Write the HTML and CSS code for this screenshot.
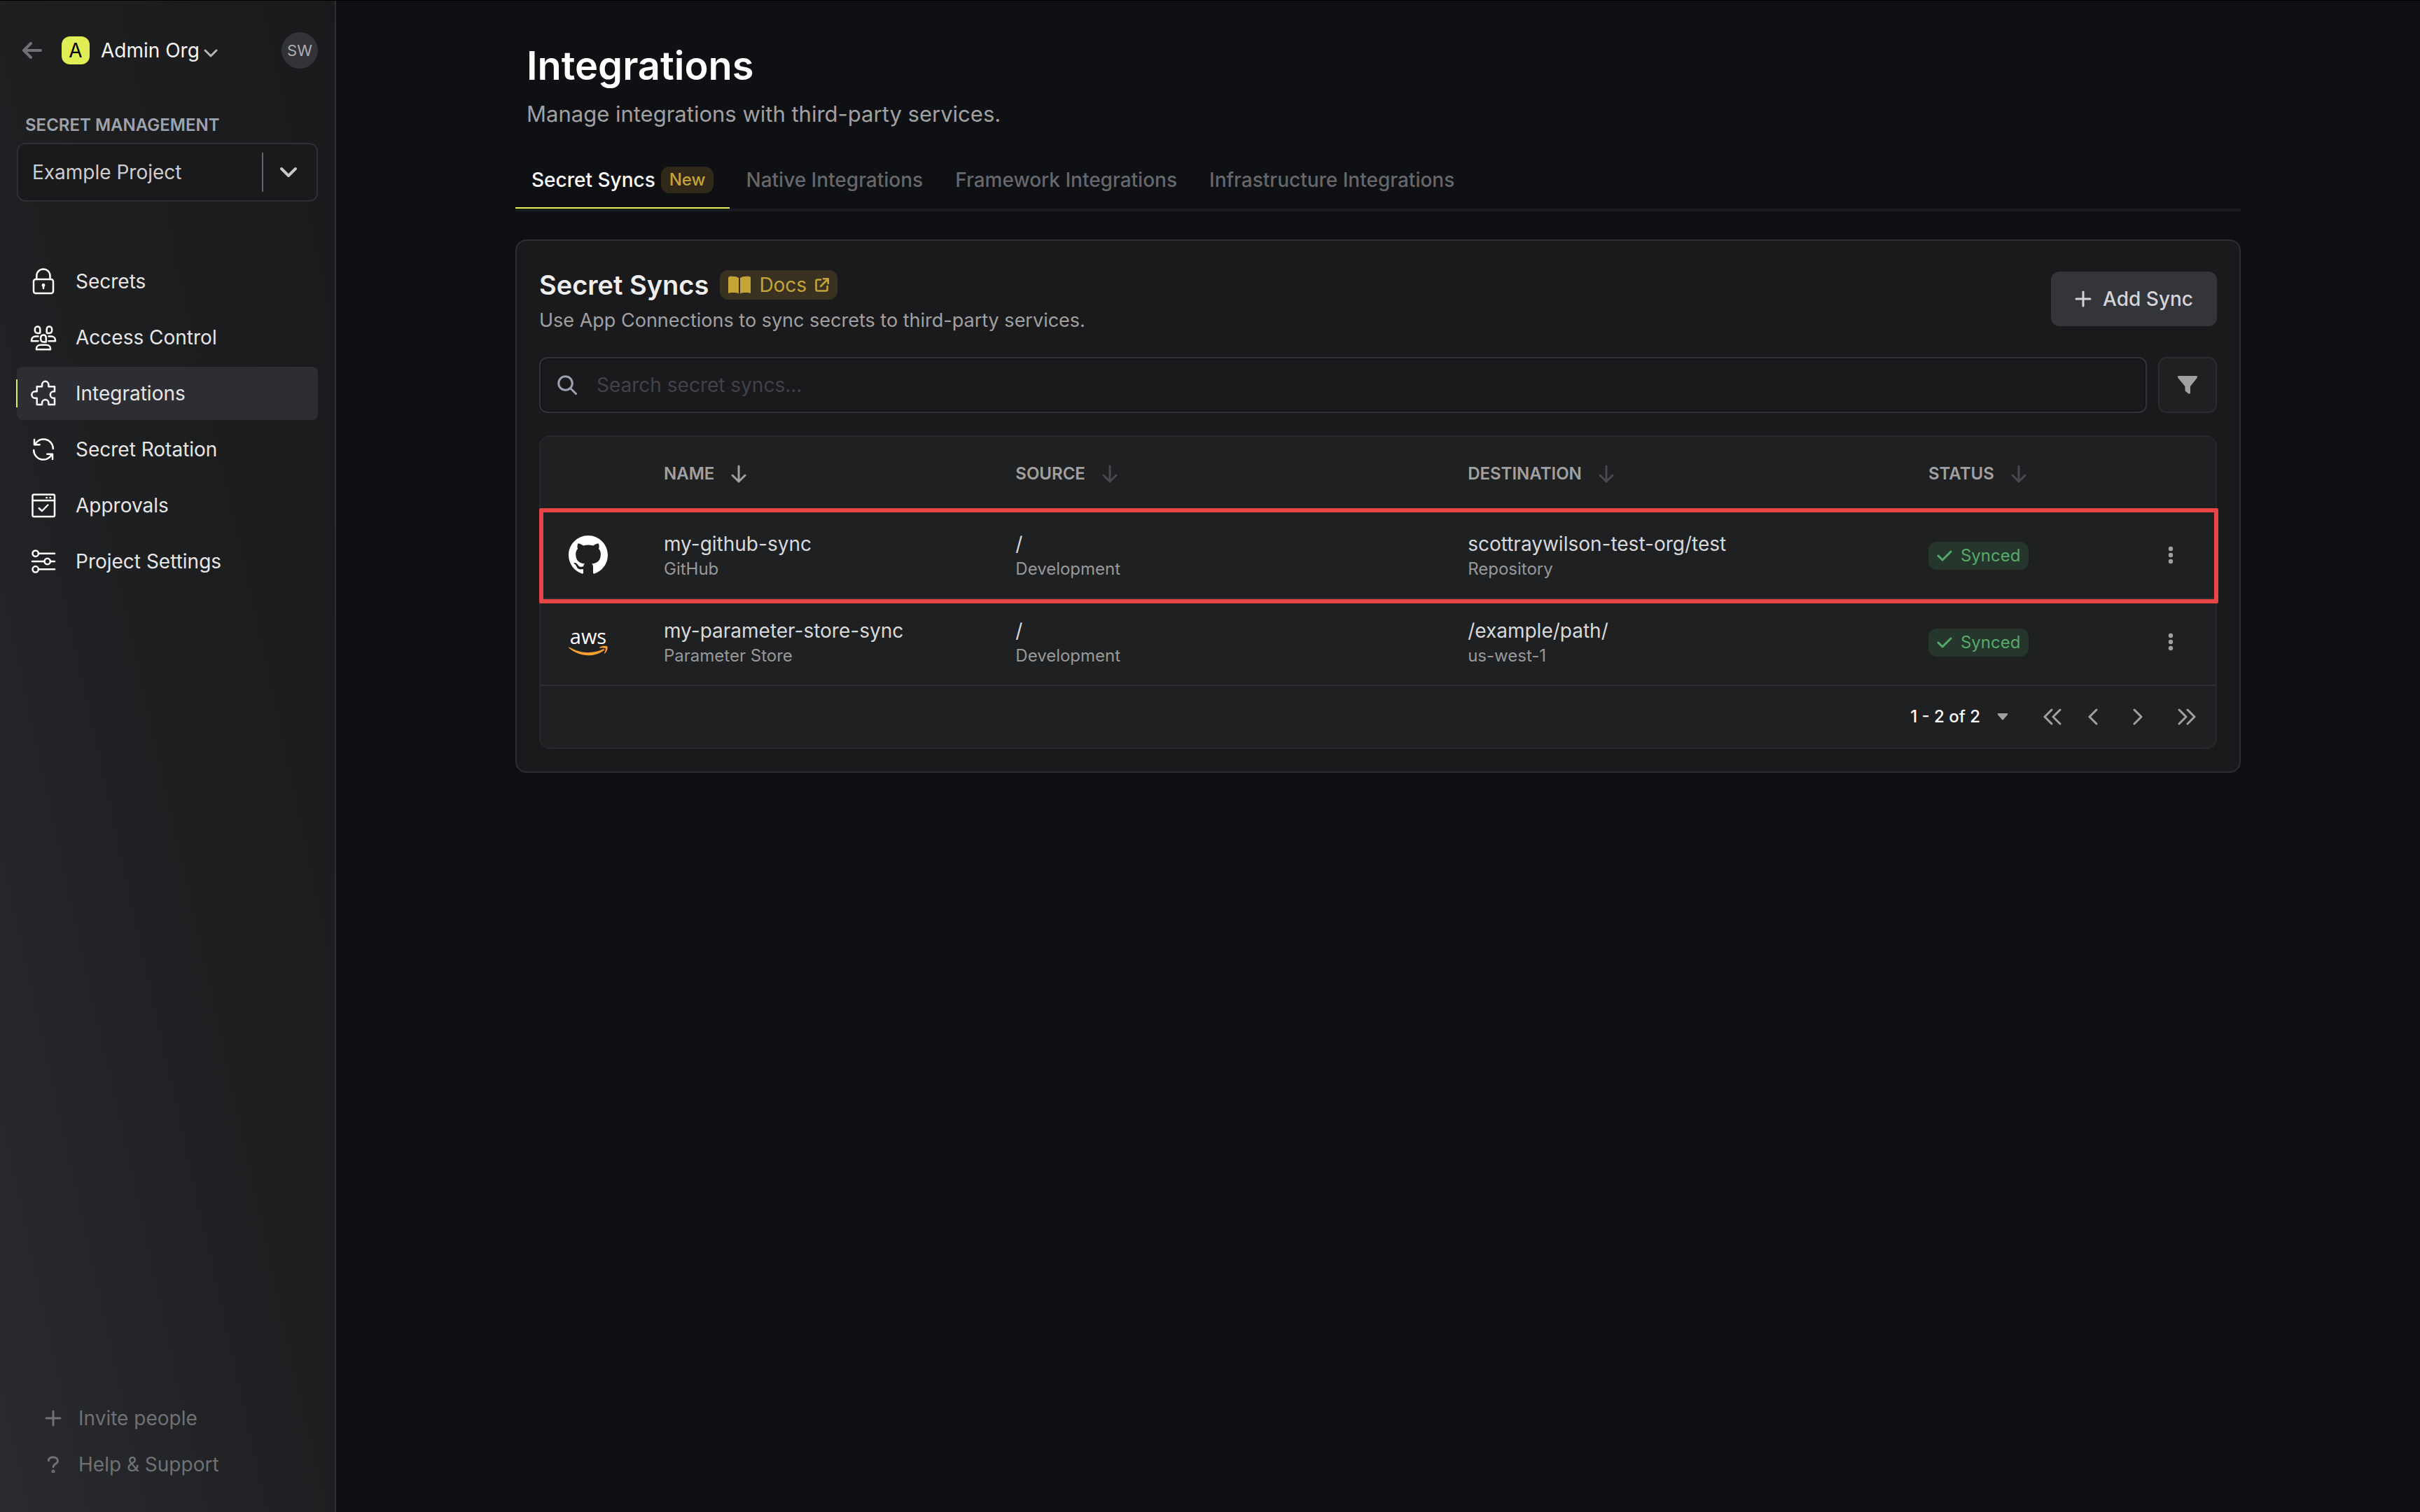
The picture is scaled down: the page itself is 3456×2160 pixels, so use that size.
FILE: index.html
```
<!DOCTYPE html>
<html lang="en">
<head>
    <meta charset="UTF-8">
    <title>Integrations</title>
    <link rel="stylesheet" href="styles.css">
</head>
<body>
    <div class="layout">
        <aside class="sidebar">
            <div class="org-bar">
                <a href="#" class="back" aria-label="Back">
                    <svg width="28" height="24" viewBox="0 0 28 24"><path d="M12 2L2 12l10 10M2 12h24" /></svg>
                </a>
                <button type="button" class="org-button">
                    <span class="org-logo">A</span>
                    <span>Admin Org</span>
                    <svg width="20" height="14" viewBox="0 0 20 14"><path d="M2 3l8 8 8-8" /></svg>
                </button>
                <button type="button" class="avatar">SW</button>
            </div>

            <label class="project-label" for="project">SECRET MANAGEMENT</label>
            <div class="project-select">
                <select id="project" name="project">
                    <option>Example Project</option>
                </select>
                <span class="project-arrow">
                    <svg width="24" height="16" viewBox="0 0 24 16"><path d="M2 3l10 10L22 3" /></svg>
                </span>
            </div>

            <nav class="menu">
                <a href="#">
                    <svg width="40" height="40" viewBox="0 0 40 40">
                        <rect x="6" y="17" width="28" height="20" rx="3" />
                        <path d="M10.3 17v-5a9.6 9.6 0 0 1 19.2 0v5" />
                        <path d="M20 25v5" /><circle cx="20" cy="25.4" r="1.2" />
                    </svg>
                    Secrets
                </a>
                <a href="#">
                    <svg width="40" height="40" viewBox="0 0 40 40">
                        <path d="M11.5 4.5c2.5 0 3.8 2 3.8 4.5v4q0 1-1 1H12c-3 0-4.2-2-4.2-4.8s1.200-4.700 3.700-4.700z" />
                        <path d="M28.5 4.5c-2.5 0-3.8 2-3.8 4.5v4q0 1 1 1H28c3 0 4.2-2 4.2-4.8s-1.200-4.700-3.700-4.700z" />
                        <path d="M20 16.500c2.700 0 3.800 2 3.800 4.600v5.400h-4c-2.800 0-3.700-2.200-3.700-5.200s1.200-4.800 3.900-4.800z" />
                        <path d="M12.500 18.500H9c-3.600 0-6 2.500-6 5.500v1.300h9.500M27.500 18.500H31c3.600 0 6 2.500 6 5.500v1.300h-9.500" />
                        <path d="M10 37.200V36c0-3 2.500-5.200 6-5.200h8c3.500 0 6 2.200 6 5.200v1.200z" />
                    </svg>
                    Access Control
                </a>
                <a href="#" class="active">
                    <svg width="40" height="40" viewBox="0 0 40 40">
                        <path d="M10.7 10.3H18V8a4.700 5.200 0 0 1 9.400 0v2.300H36v7h-1.500a4.700 4.700 0 0 0 0 9.400H36V36h-8.600v-2.300a4.700 4.700 0 0 0-9.400 0V36h-7.300v-9.300H8a4.700 4.700 0 0 1 0-9.400h2.700z" />
                    </svg>
                    Integrations
                </a>
                <a href="#">
                    <svg width="40" height="40" viewBox="0 0 40 40">
                        <path d="M7 6v7.300h7.700M8 13a13.600 13.600 0 0 1 25.800 6" />
                        <path d="M33 34v-7.300h-7.700M32 27a13.600 13.600 0 0 1-25.800-6" />
                    </svg>
                    Secret Rotation
                </a>
                <a href="#">
                    <svg width="40" height="40" viewBox="0 0 40 40">
                        <rect x="4.500" y="4.500" width="31.500" height="31.500" rx="2" />
                        <path d="M4.500 13H36M13.700 24l4.300 4 8.300-8.500M24.300 9h.6M29.500 9h.6" />
                    </svg>
                    Approvals
                </a>
                <a href="#">
                    <svg width="40" height="40" viewBox="0 0 40 40">
                        <circle cx="8.700" cy="8.700" r="4.200" /><path d="M13 8.700h23" />
                        <path d="M4 20h17.500M30 20h6" /><circle cx="25.700" cy="20" r="4.200" />
                        <circle cx="8.700" cy="31.300" r="4.200" /><path d="M13 31.300h23" />
                    </svg>
                    Project Settings
                </a>
            </nav>

            <div class="sidebar-footer">
                <button type="button">
                    <svg width="24" height="24" viewBox="0 0 24 24"><path d="M12 2v20M2 12h20" /></svg>
                    Invite people
                </button>
                <button type="button">
                    <svg width="24" height="24" viewBox="0 0 24 24"><path d="M5.500 6.500C5.500 3 8 1.800 12 1.800c4.200 0 6.500 2.200 6.500 5.200 0 4.200-6.300 4.200-6.300 8.500" /><circle cx="12" cy="22" r="1" /></svg>
                    Help &amp; Support
                </button>
            </div>
        </aside>

        <main class="main">
            <div class="container">
                <header class="page-header">
                    <h1>Integrations</h1>
                    <p>Manage integrations with third-party services.</p>
                </header>

                <nav class="tabs">
                    <a href="#" class="active">Secret Syncs <span class="badge-new">New</span></a>
                    <a href="#">Native Integrations</a>
                    <a href="#">Framework Integrations</a>
                    <a href="#">Infrastructure Integrations</a>
                </nav>

                <section class="card">
                    <div class="card-header">
                        <div>
                            <div class="card-title">
                                <h2>Secret Syncs</h2>
                                <a href="#" class="docs">
                                    <svg width="32" height="26" viewBox="0 0 32 26"><path d="M15 3.200C12 .8 5 .3 1.200 1.300Q0 1.600 0 3v22c4-1.400 11-1.200 15 .3zM17 3.200C20 .8 27 .3 30.800 1.300 31.600 1.600 32 2 32 3v22c-4-1.400-11-1.200-15 .3z" fill="currentColor" /></svg>
                                    Docs
                                    <svg class="line" width="20" height="20" viewBox="0 0 20 20"><path d="M8 2.500H3.500q-2 0-2 2v12q0 2 2 2h12q2 0 2-2V12M12 1.300h6.700V8M18 2L8 12" /></svg>
                                </a>
                            </div>
                            <p>Use App Connections to sync secrets to third-party services.</p>
                        </div>
                        <button type="button" class="add-button">
                            <svg width="24" height="24" viewBox="0 0 24 24"><path d="M12 2v20M2 12h20" /></svg>
                            Add Sync
                        </button>
                    </div>

                    <div class="toolbar">
                        <label class="search">
                            <svg width="28" height="28" viewBox="0 0 28 28"><circle cx="11.500" cy="11.500" r="9.800" /><path d="M19 19l7.500 7.500" /></svg>
                            <input type="search" placeholder="Search secret syncs..." aria-label="Search secret syncs">
                        </label>
                        <button type="button" class="filter-button" aria-label="Filter">
                            <svg width="28" height="26" viewBox="0 0 28 26"><path d="M1.500 0h25C28 0 28.500 1.700 27.500 3L18 15v9c0 1.500-1.500 2-2.600 1.200l-4-3Q10.500 21.500 10.500 20v-5L.5 3C-.5 1.700 0 0 1.500 0z" fill="currentColor" /></svg>
                        </button>
                    </div>

                    <div class="table-box">
                        <table>
                            <colgroup>
                                <col class="col-icon">
                                <col class="col-name">
                                <col class="col-source">
                                <col class="col-destination">
                                <col>
                                <col class="col-actions">
                            </colgroup>
                            <thead>
                                <tr>
                                    <th></th>
                                    <th>
                                        <button type="button" class="sort sorted">NAME
                                            <svg width="22" height="26" viewBox="0 0 22 26"><path d="M11 2v22M2 15l9 9 9-9" /></svg>
                                        </button>
                                    </th>
                                    <th>
                                        <button type="button" class="sort">SOURCE
                                            <svg width="22" height="26" viewBox="0 0 22 26"><path d="M11 2v22M2 15l9 9 9-9" /></svg>
                                        </button>
                                    </th>
                                    <th>
                                        <button type="button" class="sort">DESTINATION
                                            <svg width="22" height="26" viewBox="0 0 22 26"><path d="M11 2v22M2 15l9 9 9-9" /></svg>
                                        </button>
                                    </th>
                                    <th>
                                        <button type="button" class="sort">STATUS
                                            <svg width="22" height="26" viewBox="0 0 22 26"><path d="M11 2v22M2 15l9 9 9-9" /></svg>
                                        </button>
                                    </th>
                                    <th></th>
                                </tr>
                            </thead>
                            <tbody>
                                <tr class="highlight">
                                    <td class="logo">
                                        <svg width="56" height="56" viewBox="0 0 16 16"><path fill="#fff" d="M8 0C3.580 0 0 3.580 0 8c0 3.540 2.290 6.530 5.470 7.590.4.070.55-.17.55-.38 0-.19-.01-.82-.01-1.490-2.010.37-2.530-.49-2.690-.94-.09-.23-.48-.94-.82-1.130-.28-.15-.68-.52-.01-.53.63-.01 1.080.58 1.230.82.72 1.210 1.870.87 2.330.66.07-.52.28-.87.51-1.070-1.780-.2-3.640-.89-3.640-3.950 0-.87.31-1.590.82-2.150-.08-.2-.36-1.020.08-2.120 0 0 .67-.21 2.200.82.64-.18 1.320-.27 2-.27.68 0 1.360.09 2 .27 1.530-1.040 2.200-.82 2.200-.82.44 1.100.16 1.920.08 2.120.51.56.82 1.270.82 2.150 0 3.070-1.870 3.750-3.650 3.950.29.25.54.73.54 1.480 0 1.070-.01 1.930-.01 2.200 0 .21.15.46.55.38A8.010 8.010 0 0 0 16 8c0-4.420-3.580-8-8-8z" /></svg>
                                    </td>
                                    <td>my-github-sync<small>GitHub</small></td>
                                    <td>/<small>Development</small></td>
                                    <td>scottraywilson-test-org/test<small>Repository</small></td>
                                    <td><span class="status"><svg width="22" height="18" viewBox="0 0 22 18"><path d="M2 9l6 6L20 3" /></svg>Synced</span></td>
                                    <td>
                                        <button type="button" class="more" aria-label="More options">
                                            <svg width="8" height="26" viewBox="0 0 8 26"><circle cx="4" cy="4" r="3.200" /><circle cx="4" cy="13" r="3.200" /><circle cx="4" cy="22" r="3.200" /></svg>
                                        </button>
                                    </td>
                                </tr>
                                <tr>
                                    <td class="logo">
                                        <svg width="56" height="56" viewBox="0 0 56 56">
                                            <text class="aws-text" x="28" y="31" text-anchor="middle">aws</text>
                                            <path fill="#f7a031" d="M1 35.500c17 9.500 32 10 48.500 2.800 1.500-.5 2.500.8 1.200 1.700C36 51 15 49.500.3 36.600c-.6-.6-.1-1.400.7-1.100z" />
                                            <path fill="#f7a031" d="M44.500 36.600c-.6-.4-.4-1 .1-1.300 3-2 9.500-2 10.700-.7 1.200 1.500-.3 7.400-3.400 9.900-.6.5-1 .2-.8-.5.8-2 2.300-5.700 1.600-6.700-.8-.9-5.400-.8-8.200-.7z" />
                                        </svg>
                                    </td>
                                    <td>my-parameter-store-sync<small>Parameter Store</small></td>
                                    <td>/<small>Development</small></td>
                                    <td>/example/path/<small>us-west-1</small></td>
                                    <td><span class="status"><svg width="22" height="18" viewBox="0 0 22 18"><path d="M2 9l6 6L20 3" /></svg>Synced</span></td>
                                    <td>
                                        <button type="button" class="more" aria-label="More options">
                                            <svg width="8" height="26" viewBox="0 0 8 26"><circle cx="4" cy="4" r="3.200" /><circle cx="4" cy="13" r="3.200" /><circle cx="4" cy="22" r="3.200" /></svg>
                                        </button>
                                    </td>
                                </tr>
                            </tbody>
                        </table>

                        <div class="pagination">
                            <button type="button" class="page-size">1 - 2 of 2
                                <svg width="16" height="10" viewBox="0 0 16 10"><path d="M1.500 0h13q1.500.5.500 2L9 9q-1 1-2 0L1 2Q0 .5 1.500 0z" /></svg>
                            </button>
                            <button type="button" aria-label="First page"><svg width="26" height="24" viewBox="0 0 26 24"><path d="M12 2L2 12l10 10M24 2L14 12l10 10" /></svg></button>
                            <button type="button" class="prev" aria-label="Previous page"><svg width="14" height="24" viewBox="0 0 14 24"><path d="M12 2L2 12l10 10" /></svg></button>
                            <button type="button" aria-label="Next page"><svg width="14" height="24" viewBox="0 0 14 24"><path d="M2 2l10 10L2 22" /></svg></button>
                            <button type="button" aria-label="Last page"><svg width="26" height="24" viewBox="0 0 26 24"><path d="M2 2l10 10L2 22M14 2l10 10-10 10" /></svg></button>
                        </div>
                    </div>
                </section>
            </div>
        </main>
    </div>
</body>
</html>
```
FILE: styles.css
```
* {
    box-sizing: border-box;
}

body {
    margin: 0;
    background-color: #0e1014;
    color: #d8d9db;
    font-family: Inter, sans-serif;
    font-size: 28px;
    line-height: 40px;
}

h1,
h2,
p {
    margin: 0;
}

a {
    color: inherit;
    text-decoration: none;
}

button {
    margin: 0;
    padding: 0;
    border: none;
    background: none;
    color: inherit;
    font: inherit;
    cursor: pointer;
}

svg {
    display: block;
    flex-shrink: 0;
    fill: none;
    stroke-linecap: round;
    stroke-linejoin: round;
}

.layout {
    display: flex;
    min-height: 100vh;
    border-top: 1px solid #000;
}

/* Sidebar */
.sidebar {
    display: flex;
    flex-direction: column;
    flex-shrink: 0;
    width: 480px;
    padding: 45px 24px 48px;
    border-right: 2px solid #2d2f33;
    background: linear-gradient(to top right, #2a2b2f, #1e1f21, #1a1a1c);
}

.org-bar {
    display: flex;
    align-items: center;
    margin-bottom: 62px;
    padding-left: 8px;
}

.back {
    margin-right: 28px;
}

.back svg {
    stroke: #707174;
    stroke-width: 4;
}

.org-button {
    display: flex;
    align-items: center;
    color: #f4f4f5;
}

.org-logo {
    width: 40px;
    margin-right: 16px;
    border-radius: 12px;
    background-color: #e0ed54;
    color: #000;
}

.org-button svg {
    margin: 8px 0 0 6px;
    stroke: #b5b5b7;
    stroke-width: 3;
}

.avatar {
    width: 52px;
    height: 52px;
    margin-left: auto;
    border-radius: 50%;
    background-color: #323338;
    color: #adadaf;
    font-size: 22px;
}

.project-label {
    margin-bottom: 6px;
    padding-left: 12px;
    color: #9ca3af;
    font-size: 24px;
    font-weight: 600;
    line-height: 38px;
}

.project-select {
    position: relative;
    margin-bottom: 76px;
}

.project-select select {
    width: 100%;
    height: 84px;
    padding: 0 80px 0 20px;
    border: 2px solid #2d2f33;
    border-radius: 12px;
    background-color: #1a1a1c;
    color: #cdcdcf;
    font: inherit;
    appearance: none;
}

.project-arrow {
    position: absolute;
    top: 14px;
    right: 0;
    display: flex;
    align-items: center;
    justify-content: center;
    width: 80px;
    height: 56px;
    padding-right: 6px;
    border-left: 2px solid #66676a;
    pointer-events: none;
}

.project-arrow svg {
    stroke: #c8c8ca;
    stroke-width: 4;
}

.menu {
    display: flex;
    flex-direction: column;
    gap: 4px;
    color: #e6e6e7;
}

.menu a {
    position: relative;
    display: flex;
    align-items: center;
    gap: 26px;
    height: 76px;
    padding: 0 18px;
    border-radius: 8px;
}

.menu a.active {
    background-color: #2d2e33;
}

.menu a.active::before {
    content: "";
    position: absolute;
    top: 18px;
    left: -1px;
    width: 2px;
    height: 40px;
    background-color: #e0ed54;
}

.menu svg {
    stroke: #fff;
    stroke-width: 2.5;
}

.sidebar-footer {
    display: flex;
    flex-direction: column;
    gap: 26px;
    margin-top: auto;
    padding-left: 40px;
    color: #707174;
}

.sidebar-footer button {
    display: flex;
    align-items: center;
    gap: 24px;
}

.sidebar-footer svg {
    stroke: #707174;
    stroke-width: 3;
}

/* Page */
.main {
    flex: 1;
    min-width: 0;
}

.container {
    max-width: 2560px;
    margin: 0 auto;
    padding: 57px 48px;
}

.page-header {
    margin-bottom: 30px;
    padding-left: 16px;
}

.page-header h1 {
    margin-bottom: 8px;
    color: #fff;
    font-size: 56px;
    font-weight: 600;
    line-height: 72px;
}

.page-header p {
    color: #a0a0a2;
    font-size: 31px;
    line-height: 50px;
}

.tabs {
    display: flex;
    margin-bottom: 40px;
    border-bottom: 4px solid #1b1c1e;
    color: #66676b;
    font-weight: 500;
}

.tabs a {
    display: flex;
    align-items: center;
    gap: 8px;
    height: 80px;
    padding: 0 23px;
    border-bottom: 2px solid transparent;
}

.tabs a.active {
    border-color: #e0ed54;
    color: #fff;
}

.badge-new {
    padding: 0 12px;
    border-radius: 12px;
    background-color: #30291a;
    color: #c4a437;
    font-size: 24px;
    line-height: 38px;
}

.card {
    padding: 32px;
    border: 2px solid #2d2e31;
    border-radius: 16px;
    background-color: #1a1a1c;
}

.card-header {
    display: flex;
    align-items: center;
    justify-content: space-between;
    margin-bottom: 32px;
    color: #a0a0a2;
}

.card-header p {
    font-size: 27px;
}

.card-title {
    display: flex;
    align-items: center;
    gap: 16px;
    height: 62px;
}

.card-title h2 {
    color: #eeeeef;
    font-size: 38px;
    font-weight: 600;
}

.docs {
    display: flex;
    align-items: center;
    gap: 12px;
    height: 42px;
    padding: 0 12px;
    border-radius: 12px;
    background-color: #3a3220;
    color: #c4a437;
}

.docs .line {
    stroke: #c4a437;
    stroke-width: 2.6;
}

.add-button {
    display: flex;
    align-items: center;
    gap: 16px;
    height: 78px;
    padding: 0 34px;
    border-radius: 12px;
    background-color: #343539;
    color: #d3d4d9;
    font-weight: 500;
}

.add-button svg {
    stroke: #d3d4d9;
    stroke-width: 3;
}

.toolbar {
    display: flex;
    gap: 16px;
    margin-bottom: 32px;
}

.search {
    display: flex;
    flex: 1;
    align-items: center;
    gap: 28px;
    height: 80px;
    padding: 0 24px;
    border: 2px solid #323338;
    border-radius: 12px;
    box-shadow: inset 0 0 2px 1px #101116;
}

.search svg {
    stroke: #9ca3af;
    stroke-width: 3;
}

.search input {
    flex: 1;
    padding: 0;
    border: none;
    outline: none;
    background: none;
    color: #d8d9db;
    font: inherit;
}

.search input::placeholder {
    color: #40414b;
}

.filter-button {
    display: flex;
    align-items: center;
    justify-content: center;
    width: 84px;
    height: 80px;
    border: 2px solid #2b2c2f;
    border-radius: 12px;
    background-color: #1f2022;
    color: #a0a0a2;
}

/* Table */
.table-box {
    border: 2px solid #27282b;
    border-radius: 16px;
    background-color: #1f2022;
}

table {
    width: 100%;
    border-spacing: 0;
    table-layout: fixed;
}

.col-icon {
    width: 136px;
}

.col-name {
    width: 21%;
}

.col-source {
    width: 27%;
}

.col-destination {
    width: 27.5%;
}

.col-actions {
    width: 128px;
}

th,
td {
    padding: 0 40px;
    border-bottom: 2px solid #2d2e31;
    text-align: left;
    vertical-align: middle;
}

th {
    height: 108px;
}

td {
    height: 124px;
}

td small {
    display: block;
    color: #97989a;
    font-size: 24px;
    line-height: 32px;
}

.sort {
    display: flex;
    align-items: center;
    gap: 24px;
    color: #a0a0a2;
    font-size: 24px;
    font-weight: 600;
}

.sort svg {
    stroke: #48494c;
    stroke-width: 3;
}

.sort.sorted svg {
    stroke: #a0a0a2;
}

.logo {
    padding-right: 0;
}

.highlight {
    position: relative;
}

.highlight .logo::after {
    content: "";
    position: absolute;
    inset: -6px -4px -6px -2px;
    border: 6px solid #e94547;
    border-radius: 2px;
    pointer-events: none;
}

.aws-text {
    fill: #fff;
    font-family: "Open Sans", sans-serif;
    font-size: 29px;
}

.status {
    display: inline-flex;
    align-items: center;
    gap: 12px;
    height: 40px;
    padding: 0 12px;
    border-radius: 12px;
    background-color: #27362d;
    color: #56aa68;
    font-size: 24px;
    vertical-align: middle;
}

.status svg {
    stroke: #56aa68;
    stroke-width: 3;
}

.more {
    display: block;
    margin-left: 20px;
}

.more svg {
    fill: #a0a0a2;
}

.pagination {
    display: flex;
    align-items: center;
    justify-content: flex-end;
    height: 88px;
    padding-right: 28px;
}

.pagination button {
    display: flex;
    align-items: center;
    margin-left: 50px;
}

.pagination .prev {
    margin-left: 38px;
}

.pagination svg {
    stroke: #a0a0a2;
    stroke-width: 3;
}

.pagination .page-size {
    gap: 24px;
    color: #fff;
    font-size: 24px;
    font-weight: 500;
}

.pagination .page-size svg {
    fill: #a0a0a2;
    stroke: none;
}
```
